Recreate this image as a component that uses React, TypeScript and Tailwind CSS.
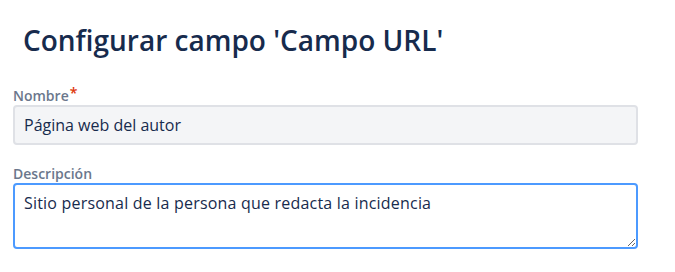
export default function App() {
  return (
    <div
      className="w-[675px] h-[272px] bg-white text-[#172b4d]"
      style={{ fontFamily: '"Open Sans", "Noto Sans", sans-serif' }}
    >
      <div className="px-[23px] pt-[22px]">
        <h1 className="text-[28px] leading-[36px] font-semibold">Configurar campo 'Campo URL'</h1>
      </div>

      <div className="pl-[13px] pr-[37px] pt-[30px]">
        {/* Nombre */}
        <label className="block text-[14px] leading-[16px] font-semibold text-[#6b778c]">
          Nombre<span className="text-[#de350b] align-top text-[14px] leading-[10px] ml-[1px]">*</span>
        </label>
        <input
          readOnly
          value="Página web del autor"
          className="mt-[1px] w-full h-[40px] rounded-[4px] border-2 border-[#dfe1e6] bg-[#f4f5f7] px-[9px] text-[16px] text-[#172b4d] outline-none"
        />

        {/* Descripción */}
        <label className="block mt-[21px] text-[14px] leading-[16px] font-semibold text-[#6b778c]">Descripción</label>
        <textarea
          readOnly
          value="Sitio personal de la persona que redacta la incidencia"
          className="mt-[1px] block w-full h-[66px] rounded-[4px] border-2 border-[#4c9aff] bg-white px-[9px] py-[7px] text-[16px] leading-[22px] tracking-[0.2px] text-[#172b4d] outline-none resize"
        />
      </div>
    </div>
  );
}
